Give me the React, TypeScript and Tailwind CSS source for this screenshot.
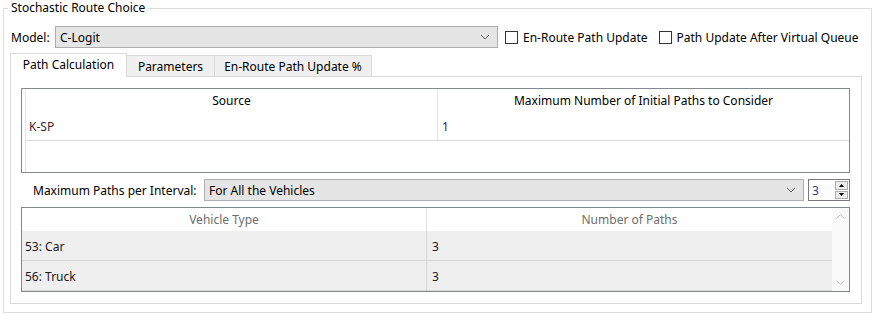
import React from "react";

const Chevron = () => (
  <svg width="10" height="6" viewBox="0 0 10 6" className="block">
    <path d="M1 1 L5 5 L9 1" fill="none" stroke="#606060" strokeWidth="1" />
  </svg>
);

const Combo = ({ text, width }: { text: string; width: string }) => (
  <div className={`${width} h-[22px] flex items-center justify-between border border-[#adadad] bg-[#e5e5e5] pl-[4px] pr-[7px]`}>
    <span className="pt-[1px]">{text}</span>
    <Chevron />
  </div>
);

const Check = ({ label }: { label: string }) => (
  <div className="flex items-center gap-[5px]">
    <div className="w-[13px] h-[13px] border border-[#333333] bg-white" />
    <span className="pt-[1px]">{label}</span>
  </div>
);

export default function App() {
  return (
    <div
      className="w-[873px] h-[316px] bg-white text-[12px] leading-[16px] text-black overflow-hidden"
      style={{ fontFamily: '"Noto Sans", "Open Sans", sans-serif' }}
    >
      <div className="pt-[8px] pl-[3px]">
        <div className="relative w-[869px] h-[305px] border border-[#dcdcdc] pl-[6px] pr-[8px] pt-[17px]">
          <span className="absolute left-[4px] top-[-9px] px-[3px] bg-white">Stochastic Route Choice</span>

          {/* Model row */}
          <div className="flex items-center h-[22px] pl-[1px]">
            <span className="w-[44px] pt-[1px]">Model:</span>
            <Combo text="C-Logit" width="w-[443px]" />
            <div className="ml-[7px]">
              <Check label="En-Route Path Update" />
            </div>
            <div className="ml-[11px]">
              <Check label="Path Update After Virtual Queue" />
            </div>
          </div>

          {/* Tabs */}
          <div className="mt-[5px] flex items-end h-[23px]">
            <div className="relative z-10 w-[117px] h-[24px] -mb-[1px] bg-white border-l border-t border-r border-[#d9d9d9] flex items-center justify-center pb-[1px]">
              Path Calculation
            </div>
            <div className="-ml-px w-[89px] h-[21px] bg-[#f0f0f0] border-l border-t border-r border-[#d9d9d9] flex items-center justify-center pt-[1px]">
              Parameters
            </div>
            <div className="-ml-px w-[158px] h-[21px] bg-[#f0f0f0] border-l border-t border-r border-[#d9d9d9] flex items-center justify-center pt-[1px]">
              En-Route Path Update %
            </div>
          </div>

          {/* Panel */}
          <div className="w-[852px] h-[228px] border border-[#d9d9d9] bg-white pl-[10px] pt-[11px]">
            {/* Table 1 */}
            <div className="w-[829px] h-[85px] border border-[#828790] flex text-[#222222]">
              <div className="w-[4px] border-r border-[#e3e3e3]" />
              <div className="flex flex-col">
                <div className="flex h-[22px]">
                  <div className="w-[412px] border-r border-[#e3e3e3] flex items-center justify-center text-black pt-[1px]">Source</div>
                  <div className="w-[411px] flex items-center justify-center text-black pt-[1px]">Maximum Number of Initial Paths to Consider</div>
                </div>
                <div className="flex h-[30px] border-b border-[#d9d9d9]">
                  <div className="w-[412px] border-r border-[#e3e3e3] flex items-center pl-[3px] pt-[2px] text-[#3a1f33]">K-SP</div>
                  <div className="w-[411px] flex items-center pl-[4px] pt-[2px] text-[#3a1f5a]">1</div>
                </div>
              </div>
            </div>

            {/* Max paths row */}
            <div className="mt-[6px] flex items-center h-[22px]">
              <span className="w-[183px] shrink-0 pl-[12px] pt-[1px]">Maximum Paths per Interval:</span>
              <Combo text="For All the Vehicles" width="w-[600px] shrink-0" />
              <div className="ml-[4px] w-[42px] shrink-0 h-[22px] border border-[#7a7a7a] bg-white flex items-stretch">
                <span className="flex-1 pl-[3px] pt-[1px] flex items-center text-[#1c3f8f]">3</span>
                <div className="w-[14px] flex flex-col py-[1px] pr-[1px] gap-[1px]">
                  <div className="flex-1 border border-[#adadad] bg-[#ececec] flex items-center justify-center">
                    <svg width="5" height="3" viewBox="0 0 5 3"><path d="M2.5 0 L5 3 L0 3 Z" fill="#000" /></svg>
                  </div>
                  <div className="flex-1 border border-[#adadad] bg-[#ececec] flex items-center justify-center">
                    <svg width="5" height="3" viewBox="0 0 5 3"><path d="M0 0 L5 0 L2.5 3 Z" fill="#000" /></svg>
                  </div>
                </div>
              </div>
            </div>

            {/* Table 2 */}
            <div className="mt-[6px] w-[829px] h-[85px] border border-[#828790] flex">
              <div className="flex flex-col w-[810px]">
                <div className="flex h-[23px] bg-white text-[#6d6d6d]">
                  <div className="w-[405px] border-r border-[#e3e3e3] flex items-center justify-center pt-[1px]">Vehicle Type</div>
                  <div className="flex-1 flex items-center justify-center pt-[1px]">Number of Paths</div>
                </div>
                <div className="flex h-[30px] bg-[#efefef] border-b border-[#d6d6d6] text-[#1a1a1a]">
                  <div className="w-[405px] border-r border-[#d6d6d6] flex items-center pl-[3px] pt-[2px]">53: Car</div>
                  <div className="flex-1 flex items-center pl-[5px] pt-[2px]">3</div>
                </div>
                <div className="flex h-[30px] bg-[#efefef] border-b border-[#d6d6d6] text-[#1a1a1a]">
                  <div className="w-[405px] border-r border-[#d6d6d6] flex items-center pl-[3px] pt-[2px]">56: Truck</div>
                  <div className="flex-1 flex items-center pl-[5px] pt-[2px]">3</div>
                </div>
              </div>
              <div className="w-[17px] bg-[#fafafa] flex flex-col justify-between items-center py-[6px]">
                <svg width="9" height="5" viewBox="0 0 9 5"><path d="M0.5 4.5 L4.5 0.5 L8.5 4.5" fill="none" stroke="#c2c2c2" /></svg>
                <svg width="9" height="5" viewBox="0 0 9 5"><path d="M0.5 0.5 L4.5 4.5 L8.5 0.5" fill="none" stroke="#c2c2c2" /></svg>
              </div>
            </div>
          </div>
        </div>
      </div>
    </div>
  );
}
